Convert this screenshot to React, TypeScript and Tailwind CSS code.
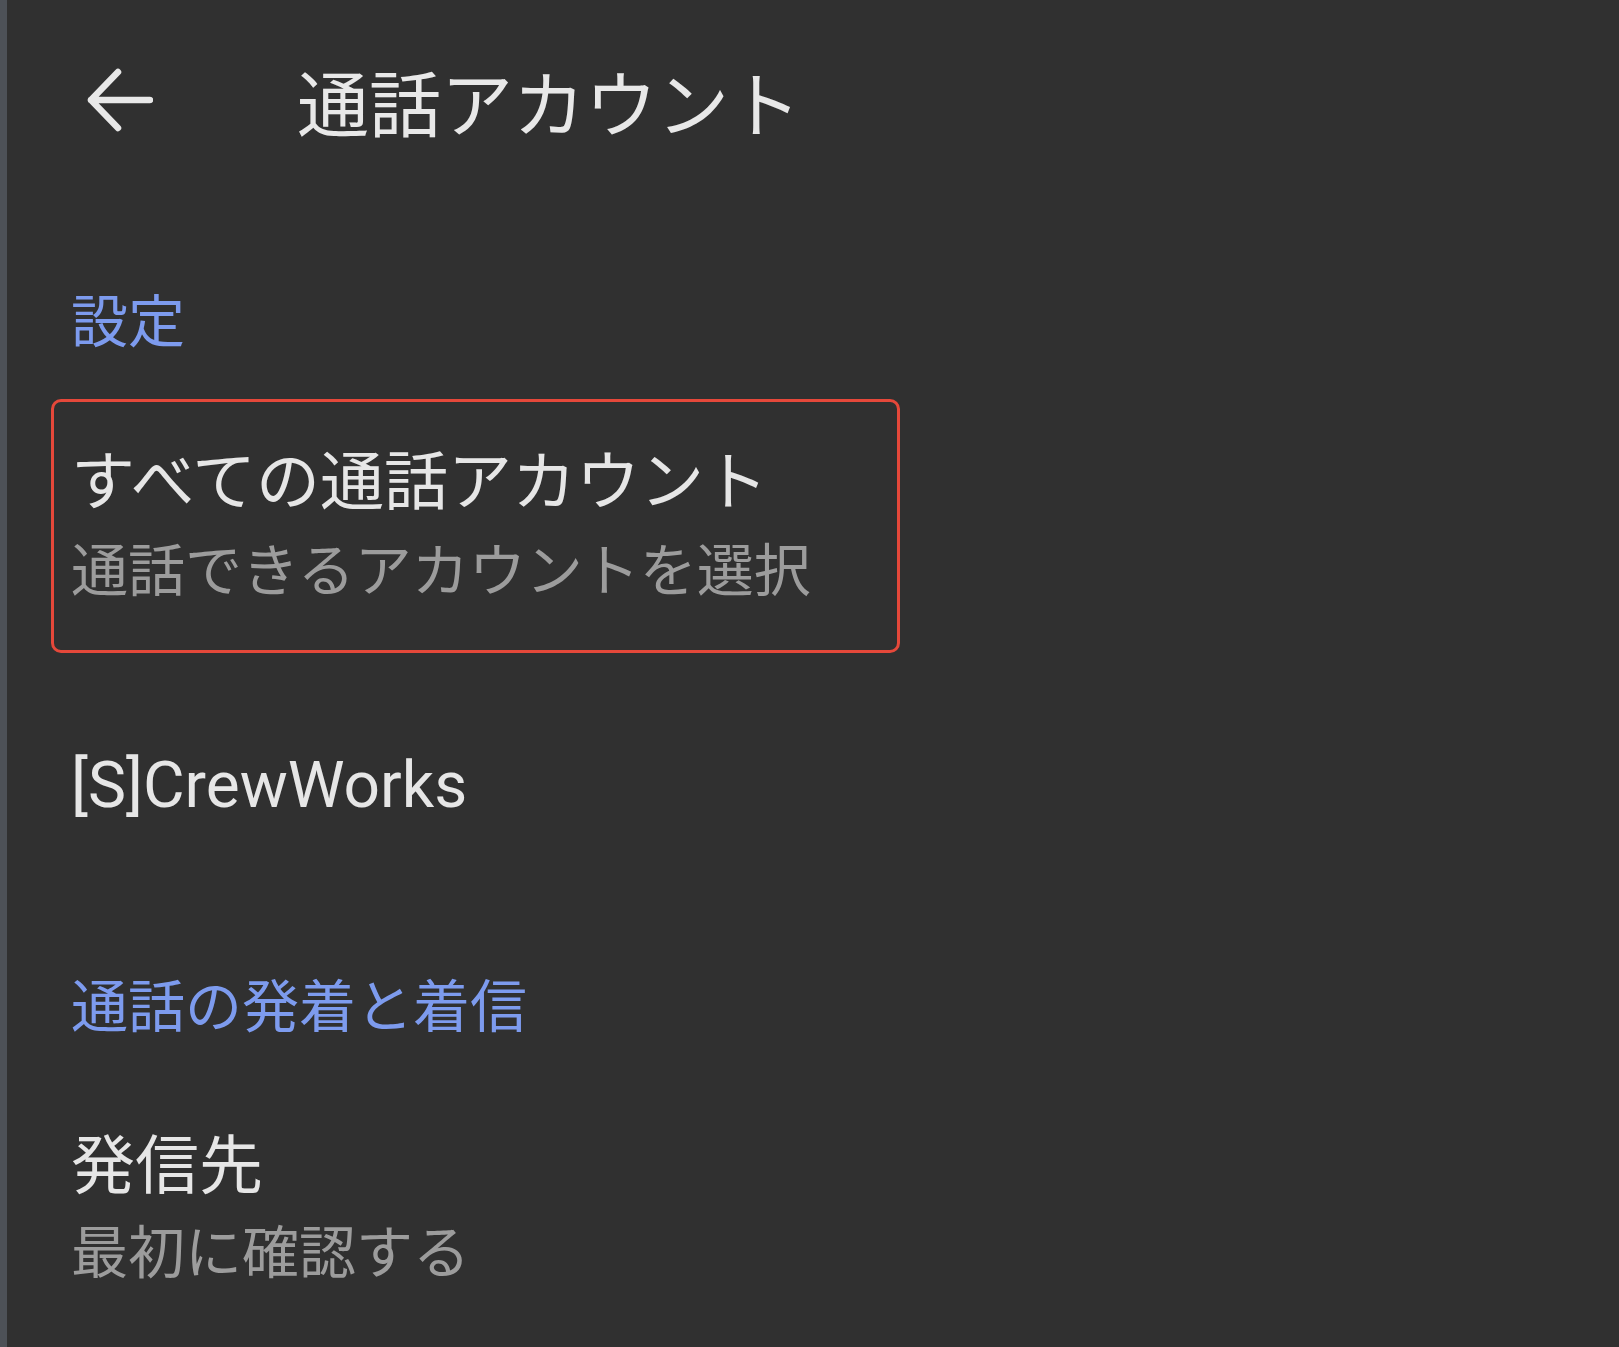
import React from 'react';

const jp = "font-['Noto_Sans_CJK_JP',sans-serif]";

const BackArrow = () => (
  <svg width="66" height="66" viewBox="0 0 66 66" fill="none" className="shrink-0">
    <path d="M4 33H63M31 5L4 33L31 61" stroke="#e8e8e8" strokeWidth="6.5" strokeLinecap="round" strokeLinejoin="round" />
  </svg>
);

export default function App() {
  return (
    <div className="flex h-[1347px] w-full overflow-hidden bg-[#303030]">
      {/* left edge strip */}
      <div className="w-[7px] shrink-0 bg-[#4d5157]" />

      <div className="flex flex-1 flex-col">
        {/* Header */}
        <div className="flex h-[200px] items-center">
          <div className="ml-[80px]">
            <BackArrow />
          </div>
          <h1 className={`ml-[144px] text-[72px] leading-[80px] text-[#e8e8e8] ${jp}`}>通話アカウント</h1>
        </div>

        {/* Section: settings */}
        <div className={`mt-[85px] pl-[64px] text-[57px] leading-[64px] text-[#7d9bee] ${jp}`}>設定</div>

        <div className="mt-[50px] ml-[44px] box-border h-[254px] w-[849px] rounded-[10px] border-[3px] border-[#e5483a] pl-[17px] pt-[38px]">
          <div className={`text-[64px] leading-[72px] text-[#e6e6e6] ${jp}`}>すべての通話アカウント</div>
          <div className={`mt-[22px] text-[57px] leading-[64px] text-[#9c9c9c] ${jp}`}>通話できるアカウントを選択</div>
        </div>

        <div className="mt-[97px] pl-[64px] font-['Roboto',sans-serif] text-[64px] leading-[72px] text-[#e6e6e6]">
          [S]CrewWorks
        </div>

        {/* Section: calls */}
        <div className={`mt-[148px] pl-[64px] text-[57px] leading-[64px] text-[#7d9bee] ${jp}`}>通話の発着と着信</div>

        <div className="mt-[90px] pl-[64px]">
          <div className={`text-[64px] leading-[72px] text-[#e6e6e6] ${jp}`}>発信先</div>
          <div className={`mt-[20px] text-[57px] leading-[64px] text-[#9c9c9c] ${jp}`}>最初に確認する</div>
        </div>
      </div>
    </div>
  );
}
